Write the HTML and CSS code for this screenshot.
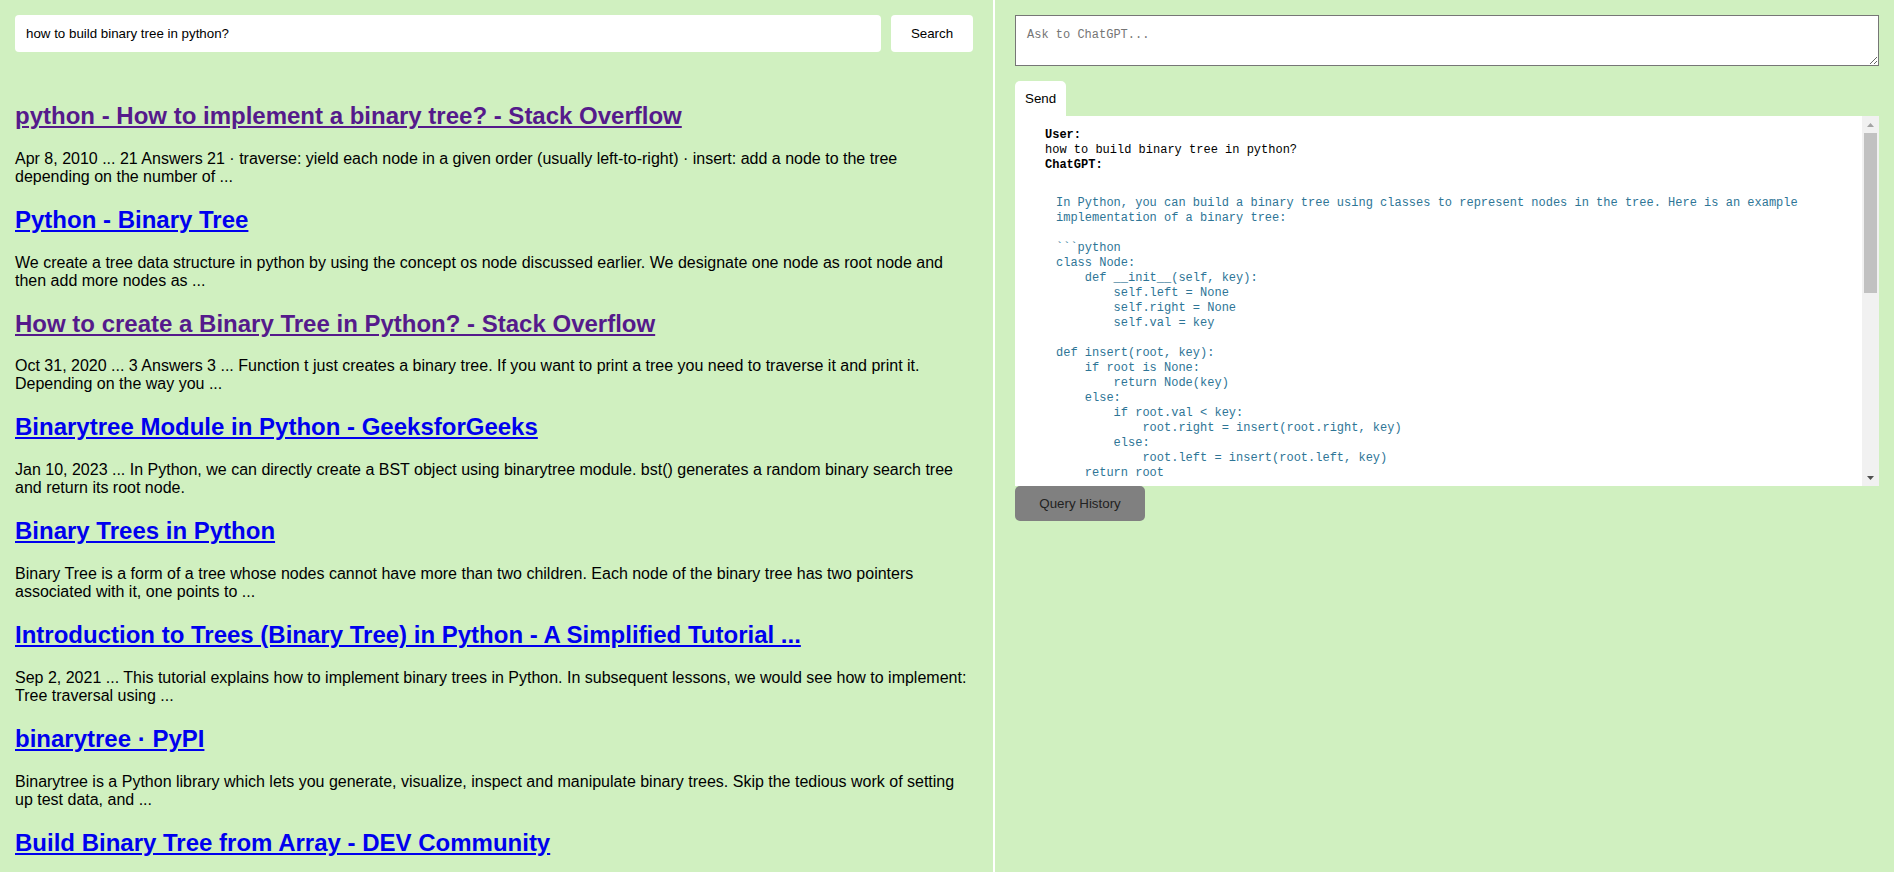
FILE: index.html
```html
<!DOCTYPE html>
<html lang="en">
<head>
<meta charset="utf-8">
<title>Search + ChatGPT</title>
<link rel="stylesheet" href="styles.css">
</head>
<body>
<div class="app">
  <div class="left">
    <form class="search">
      <input class="search-input" type="text" value="how to build binary tree in python?">
      <button class="search-btn" type="button">Search</button>
    </form>
    <div class="results">
      <div class="result">
        <h2><a class="visited" href="#">python - How to implement a binary tree? - Stack Overflow</a></h2>
        <p>Apr 8, 2010 ... 21 Answers 21 · traverse: yield each node in a given order (usually left-to-right) · insert: add a node to the tree depending on the number of ...</p>
      </div>
      <div class="result">
        <h2><a href="#">Python - Binary Tree</a></h2>
        <p>We create a tree data structure in python by using the concept os node discussed earlier. We designate one node as root node and then add more nodes as ...</p>
      </div>
      <div class="result">
        <h2><a class="visited" href="#">How to create a Binary Tree in Python? - Stack Overflow</a></h2>
        <p>Oct 31, 2020 ... 3 Answers 3 ... Function t just creates a binary tree. If you want to print a tree you need to traverse it and print it. Depending on the way you ...</p>
      </div>
      <div class="result">
        <h2><a href="#">Binarytree Module in Python - GeeksforGeeks</a></h2>
        <p>Jan 10, 2023 ... In Python, we can directly create a BST object using binarytree module. bst() generates a random binary search tree and return its root node.</p>
      </div>
      <div class="result">
        <h2><a href="#">Binary Trees in Python</a></h2>
        <p>Binary Tree is a form of a tree whose nodes cannot have more than two children. Each node of the binary tree has two pointers associated with it, one points to ...</p>
      </div>
      <div class="result">
        <h2><a href="#">Introduction to Trees (Binary Tree) in Python - A Simplified Tutorial ...</a></h2>
        <p>Sep 2, 2021 ... This tutorial explains how to implement binary trees in Python. In subsequent lessons, we would see how to implement: Tree traversal using ...</p>
      </div>
      <div class="result">
        <h2><a href="#">binarytree · PyPI</a></h2>
        <p>Binarytree is a Python library which lets you generate, visualize, inspect and manipulate binary trees. Skip the tedious work of setting up test data, and ...</p>
      </div>
      <div class="result">
        <h2><a href="#">Build Binary Tree from Array - DEV Community</a></h2>
      </div>
    </div>
  </div>
  <div class="right">
    <textarea class="ask" placeholder="Ask to ChatGPT..."></textarea>
    <button class="send" type="button">Send</button>
    <div class="output">
      <div class="output-body">
<pre class="head"><b>User:</b>
how to build binary tree in python?
<b>ChatGPT:</b></pre>
<pre class="resp">In Python, you can build a binary tree using classes to represent nodes in the tree. Here is an example
implementation of a binary tree:

```python
class Node:
    def __init__(self, key):
        self.left = None
        self.right = None
        self.val = key

def insert(root, key):
    if root is None:
        return Node(key)
    else:
        if root.val &lt; key:
            root.right = insert(root.right, key)
        else:
            root.left = insert(root.left, key)
    return root</pre>
      </div>
      <div class="vscroll">
        <div class="vs-btn">
          <svg width="7" height="4" viewBox="0 0 7 4"><polygon points="0,4 3.5,0 7,4" fill="#a3a3a3"/></svg>
        </div>
        <div class="vs-track"><div class="vs-thumb"></div></div>
        <div class="vs-btn">
          <svg width="7" height="4" viewBox="0 0 7 4"><polygon points="0,0 7,0 3.5,4" fill="#505050"/></svg>
        </div>
      </div>
    </div>
    <button class="history" type="button">Query History</button>
  </div>
</div>
</body>
</html>
```

FILE: styles.css
```css
html, body {
  margin: 0;
  height: 100%;
}

body {
  background: #d0f0c0;
  font-family: "Liberation Sans", Arial, sans-serif;
  font-size: 16px;
  color: #000;
  overflow: hidden;
}

.app {
  display: flex;
  height: 100vh;
}

.left {
  width: 995px;
  flex: none;
  box-sizing: border-box;
  padding: 15px 20px 15px 15px;
  border-right: 2px solid #fff;
  display: flex;
  flex-direction: column;
  overflow: hidden;
}

.search {
  display: flex;
  gap: 10px;
  margin: 0;
}

.search-input {
  flex: 1;
  min-width: 0;
  height: 37px;
  box-sizing: border-box;
  border: none;
  border-radius: 4px;
  background: #fff;
  padding: 0 11px;
  font-family: "Liberation Sans", Arial, sans-serif;
  font-size: 13.33px;
  color: #000;
  outline: none;
}

.search-btn {
  width: 82px;
  height: 37px;
  flex: none;
  border: none;
  border-radius: 4px;
  background: #fff;
  font-family: "Liberation Sans", Arial, sans-serif;
  font-size: 13.33px;
  color: #000;
  padding: 0;
}

.results {
  margin-top: 30px;
}

.result h2 {
  font-size: 24px;
  font-weight: bold;
  margin: 19.92px 0;
}

.result p {
  margin: 16px 0;
}

.result a {
  color: #0000ee;
  text-decoration: underline;
}

.result a.visited {
  color: #551a8b;
}

.right {
  flex: 1;
  min-width: 0;
  box-sizing: border-box;
  padding: 15px 15px 15px 20px;
  display: flex;
  flex-direction: column;
  align-items: flex-start;
}

.ask {
  display: block;
  width: 100%;
  height: 51px;
  box-sizing: border-box;
  margin: 0;
  padding: 12px 11px 8px;
  border: 1px solid #767676;
  background: #fff;
  font-family: "Liberation Mono", Consolas, monospace;
  font-size: 12px;
  line-height: 15px;
  color: #000;
  outline: none;
}

.ask::placeholder {
  color: #757575;
}

.send {
  margin-top: 15px;
  height: 35px;
  padding: 0 10px;
  border: none;
  border-radius: 5px 5px 0 0;
  background: #fff;
  font-family: "Liberation Sans", Arial, sans-serif;
  font-size: 13.33px;
  color: #000;
}

.output {
  width: 100%;
  height: 370px;
  background: #fff;
  display: flex;
}

.output-body {
  flex: 1;
  min-width: 0;
  overflow: hidden;
  padding: 12px 0 0 30px;
}

.head {
  margin: 0;
  font-family: "Liberation Mono", Consolas, monospace;
  font-size: 12px;
  line-height: 15px;
  color: #000;
}

.resp {
  margin: 23px 0 0 11px;
  font-family: "Liberation Mono", Consolas, monospace;
  font-size: 12px;
  line-height: 15px;
  color: #2e7596;
}

.vscroll {
  width: 17px;
  flex: none;
  background: #f1f1f1;
  display: flex;
  flex-direction: column;
}

.vs-btn {
  height: 17px;
  flex: none;
  display: flex;
  align-items: center;
  justify-content: center;
}

.vs-btn svg {
  display: block;
}

.vs-track {
  flex: 1;
  padding: 0 2px;
}

.vs-thumb {
  height: 160px;
  background: #c1c1c1;
}

.history {
  width: 130px;
  height: 35px;
  border: none;
  border-radius: 5px;
  background: #808080;
  font-family: "Liberation Sans", Arial, sans-serif;
  font-size: 13.33px;
  color: #222;
  padding: 0;
}
```
